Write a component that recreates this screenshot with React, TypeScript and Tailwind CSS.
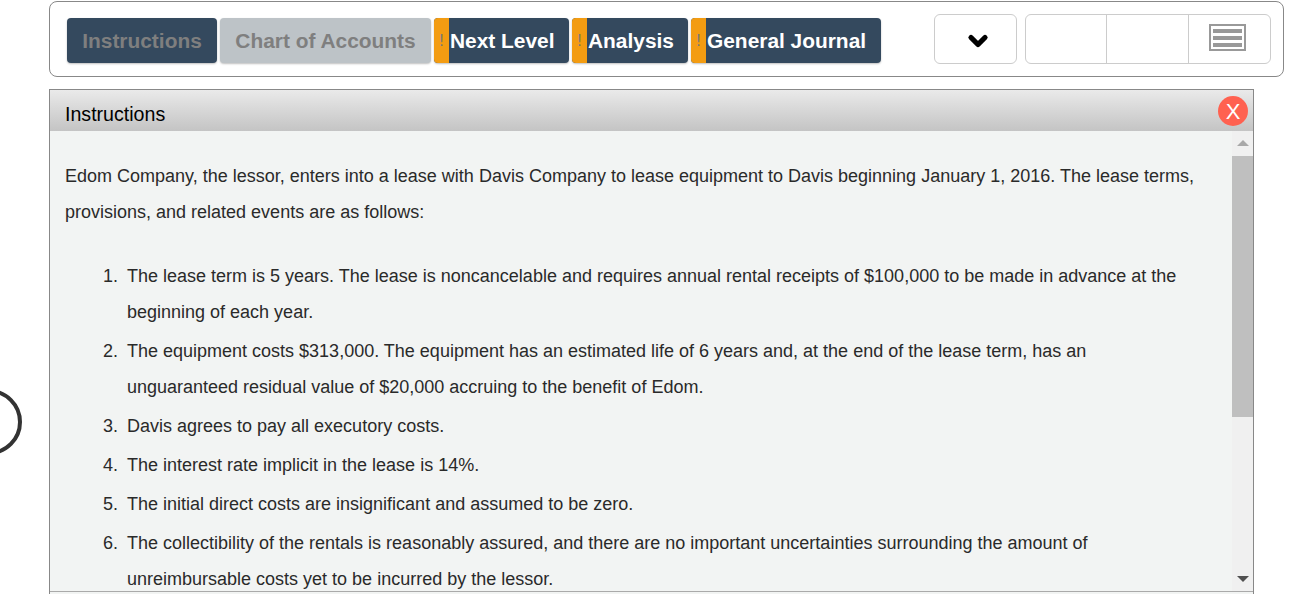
import { ChevronDown } from "lucide-react"

const steps = [
  "The lease term is 5 years. The lease is noncancelable and requires annual rental receipts of $100,000 to be made in advance at the beginning of each year.",
  "The equipment costs $313,000. The equipment has an estimated life of 6 years and, at the end of the lease term, has an unguaranteed residual value of $20,000 accruing to the benefit of Edom.",
  "Davis agrees to pay all executory costs.",
  "The interest rate implicit in the lease is 14%.",
  "The initial direct costs are insignificant and assumed to be zero.",
  "The collectibility of the rentals is reasonably assured, and there are no important uncertainties surrounding the amount of unreimbursable costs yet to be incurred by the lessor.",
]

function FlagTab({ label, width }: { label: string; width: string }) {
  return (
    <div className={`flex h-[45px] ${width} overflow-hidden rounded-[4px] bg-[#34495e] shadow-[0_1px_2px_rgba(0,0,0,0.25)]`}>
      <div className="flex w-[15px] items-center justify-center bg-[#f39c12] text-[16px] text-[#777]">!</div>
      <div className="pl-px text-[20.9px] leading-[46px] font-bold text-white">{label}</div>
    </div>
  )
}

export default function App() {
  return (
    <div className="relative flex h-[594px] w-[1310px] flex-col overflow-hidden bg-white pt-px pr-[26px] pl-[49px] font-['Liberation_Sans',Arial,sans-serif] text-[#2a2a2a]">
      {/* circle peeking in from the left edge */}
      <div className="absolute top-[389px] left-[-44px] h-[66px] w-[66px] rounded-full border-[4px] border-[#333]" />

      <div className="flex h-[76px] shrink-0 items-start rounded-[8px] border border-[#888] pl-[17px]">
        <div className="mt-4 flex gap-[3px]">
          <div className="h-[45px] w-[150px] rounded-[4px] bg-[#34495e] text-center text-[20.9px] leading-[46px] font-bold text-[#7f7f7f] shadow-[0_1px_2px_rgba(0,0,0,0.25)]">
            Instructions
          </div>
          <div className="h-[45px] w-[211px] rounded-[4px] bg-[#bdc3c7] text-center text-[20.9px] leading-[46px] font-bold text-[#7f7f7f] shadow-[0_1px_2px_rgba(0,0,0,0.25)]">
            Chart of Accounts
          </div>
          <FlagTab label="Next Level" width="w-[135px]" />
          <FlagTab label="Analysis" width="w-[116px]" />
          <FlagTab label="General Journal" width="w-[190px]" />
        </div>

        <div className="mt-3 ml-[53px] flex h-[50px] w-[83px] items-center justify-center rounded-[6px] border border-[#ccc]">
          <ChevronDown className="mt-[4px] ml-[4px] h-[28px] w-[28px] text-black" strokeWidth={4.5} />
        </div>

        <div className="mt-3 ml-2 flex h-[50px] w-[246px] rounded-[6px] border border-[#ccc]">
          <div className="w-[81px] border-r border-[#ccc]" />
          <div className="w-[82px] border-r border-[#ccc]" />
          <div className="flex flex-1 items-center justify-center pr-[4px] pb-[3px]">
            <div className="flex h-[27px] w-[37px] flex-col justify-center gap-[3px] border-2 border-[#999] bg-white px-[2px]">
              <div className="h-[4px] bg-[#999]" />
              <div className="h-[4px] bg-[#999]" />
              <div className="h-[4px] bg-[#999]" />
            </div>
          </div>
        </div>
      </div>

      <div className="mt-3 mr-[30px] flex min-h-0 flex-1 flex-col border border-b-0 border-[#888]">
        <div className="relative flex h-[41px] shrink-0 items-center bg-gradient-to-b from-[#eaeaea] to-[#c4c4c4] pt-[9px] pl-[15px] text-[19.6px] text-black">
          Instructions
          <div className="absolute top-[6px] right-[5px] flex h-[30px] w-[30px] items-center justify-center rounded-full bg-[#ff6150] text-[22px] text-white">
            X
          </div>
        </div>

        <div className="flex min-h-0 flex-1 border-b border-[#aaa] bg-[#f2f4f3]">
          <div className="min-w-0 flex-1 overflow-hidden pt-[27px] pr-[20px] pl-[15px] text-[18px] leading-9">
            <p>
              Edom Company, the lessor, enters into a lease with Davis Company to lease equipment to Davis beginning January 1, 2016. The lease terms, provisions, and related events are as follows:
            </p>
            <ol className="mt-[28px] pl-[62px]">
              {steps.map((step, index) => (
                <li key={index} className="relative mb-[3px] pr-[34px]">
                  <span className="absolute left-[-24px]">{index + 1}.</span>
                  {step}
                </li>
              ))}
            </ol>
          </div>

          <div className="flex w-[21px] shrink-0 flex-col items-center bg-[#f0f0f0]">
            <div className="flex h-[25px] w-full items-center justify-center pb-[2px]">
              <div className="h-0 w-0 border-x-[6px] border-b-[6px] border-x-transparent border-b-[#a8a8a8]" />
            </div>
            <div className="h-[261px] w-full bg-[#bfbfbf]" />
            <div className="flex-1" />
            <div className="mb-[9px] h-0 w-0 border-x-[6px] border-t-[6px] border-x-transparent border-t-[#505050]" />
          </div>
        </div>
        <div className="h-[2px] shrink-0 bg-[#f2f4f3]" />
      </div>
    </div>
  )
}
